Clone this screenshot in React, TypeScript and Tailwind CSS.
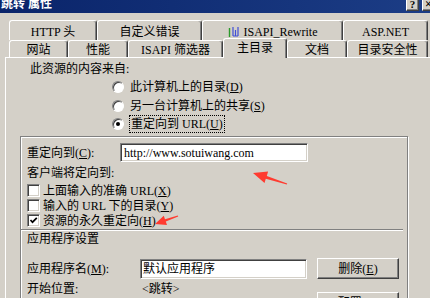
import React from "react";

const FONT = "font-['Liberation_Serif','Noto_Sans_CJK_SC',serif]";

const RAISED =
  "border border-t-white border-l-white border-r-[#404040] border-b-[#404040] shadow-[inset_-1px_-1px_#808080]";
const SUNKEN =
  "bg-white border border-t-[#808080] border-l-[#808080] border-r-white border-b-white shadow-[inset_1px_1px_#404040,inset_-1px_-1px_#d4d0c8]";

function Key({ k }: { k: string }) {
  return (
    <>
      (<u>{k}</u>)
    </>
  );
}

function Radio({ checked }: { checked?: boolean }) {
  return (
    <span className="flex h-[12px] w-[12px] shrink-0 items-center justify-center rounded-full border border-t-[#808080] border-l-[#808080] border-r-white border-b-white bg-white shadow-[inset_1px_1px_#404040]">
      {checked && <span className="h-[4px] w-[4px] rounded-full bg-black" />}
    </span>
  );
}

function Check({ checked }: { checked?: boolean }) {
  return (
    <span className={`flex h-[13px] w-[13px] shrink-0 items-center justify-center ${SUNKEN}`}>
      {checked && (
        <svg width="9" height="9" viewBox="0 0 9 9">
          <path d="M1.5 4 L3.5 6.2 L7.8 1.8" fill="none" stroke="#000" strokeWidth="1.7" />
        </svg>
      )}
    </span>
  );
}

function BackTab({ w, children }: { w: number; children: React.ReactNode }) {
  return (
    <div
      style={{ width: w }}
      className="flex h-full items-center justify-center rounded-t-[3px] border-t border-l border-white border-r border-r-[#404040] pt-[3px] shadow-[inset_-1px_0_#808080]"
    >
      {children}
    </div>
  );
}

function FrontTab({ w, selected, children }: { w: number; selected?: boolean; children: React.ReactNode }) {
  return (
    <div
      style={{ width: w }}
      className={
        selected
          ? "relative z-10 -mb-[1px] flex h-[20px] items-center justify-center rounded-t-[3px] border-t border-l border-white border-r border-r-[#404040] bg-[#d4d0c8] pb-[2px] shadow-[inset_-1px_0_#808080]"
          : "flex h-[17px] items-center justify-center rounded-t-[3px] border-t border-l border-white border-r border-r-[#404040] pt-[1px] shadow-[inset_-1px_0_#808080]"
      }
    >
      {children}
    </div>
  );
}

function RewriteIcon() {
  return (
    <svg width="12" height="12" viewBox="0 0 12 12" className="mr-[4px]">
      <path d="M1.5 2 V11" stroke="#2c9a2c" strokeWidth="1.4" />
      <path d="M5 1 V10 M7.5 4 V10 M10 1 V10 M5 10 H10" stroke="#3f4fd8" strokeWidth="1.2" fill="none" />
    </svg>
  );
}

export default function App() {
  return (
    <div className={`relative h-[298px] w-[430px] overflow-hidden bg-[#d4d0c8] text-[12px] leading-[14px] text-black ${FONT}`}>
      {/* Title bar */}
      <div className="flex h-[13px] items-start overflow-hidden bg-linear-to-r from-[#0a246a] to-[#1c3d86]">
        <span className="-mt-[3px] pl-[1px] text-[12px] font-bold leading-[14px] text-white">跳转 属性</span>
        <div className="ml-auto -mr-[5px] -mt-[3px] flex gap-[3px]">
          <div className={`flex h-[14px] w-[13px] items-center justify-center bg-[#d4d0c8] text-[11px] font-bold leading-none ${RAISED}`}>?</div>
          <div className={`flex h-[14px] w-[13px] items-center justify-center bg-[#d4d0c8] text-[12px] font-bold leading-none ${RAISED}`}>×</div>
        </div>
      </div>

      {/* Tabs */}
      <div className="pl-[9px] pt-[7px]">
        <div className="flex h-[20px]">
          <BackTab w={88}>HTTP 头</BackTab>
          <BackTab w={105}>自定义错误</BackTab>
          <BackTab w={141}>
            <RewriteIcon />
            ISAPI_Rewrite
          </BackTab>
          <BackTab w={85}>ASP.NET</BackTab>
        </div>
        <div className="flex h-[17px] items-end">
          <FrontTab w={59}>网站</FrontTab>
          <FrontTab w={60}>性能</FrontTab>
          <FrontTab w={95}>ISAPI 筛选器</FrontTab>
          <FrontTab w={64} selected>
            主目录
          </FrontTab>
          <FrontTab w={60}>文档</FrontTab>
          <FrontTab w={81}>目录安全性</FrontTab>
        </div>
      </div>

      {/* Panel */}
      <div className="ml-[5px] h-[260px] border-t border-l border-white">
        <div className="ml-[24px] mt-[4px]">此资源的内容来自:</div>
        <div className="ml-[106px] mt-[2px] flex flex-col">
          <div className="flex h-[18px] items-center gap-[6px]">
            <Radio />
            <span>
              此计算机上的目录<Key k="D" />
            </span>
          </div>
          <div className="flex h-[19px] items-center gap-[6px]">
            <Radio />
            <span>
              另一台计算机上的共享<Key k="S" />
            </span>
          </div>
          <div className="flex h-[18px] items-center gap-[5px]">
            <Radio checked />
            <span className="border border-dotted border-black px-[1px] py-[1px]">
              重定向到 URL<Key k="U" />
            </span>
          </div>
        </div>

        {/* Group */}
        <div className="ml-[14px] mt-[3px] h-[170px] w-[388px] border border-[#808080] shadow-[inset_1px_1px_white,1px_1px_white]">
          <div className="pl-[6px] pt-[6px]">
            <div className="flex items-center">
              <span className="w-[93px]">
                重定向到<Key k="C" />:
              </span>
              <div className={`flex h-[19px] w-[188px] items-center pl-[3px] ${SUNKEN}`}>http://www.sotuiwang.com</div>
            </div>
            <div className="mt-[4px]">客户端将定向到:</div>
            <div className="mt-[3px] flex flex-col">
              <div className="flex h-[15px] items-center gap-[3px]">
                <Check />
                <span>
                  上面输入的准确 URL<Key k="X" />
                </span>
              </div>
              <div className="flex h-[15px] items-center gap-[3px]">
                <Check />
                <span>
                  输入的 URL 下的目录<Key k="Y" />
                </span>
              </div>
              <div className="flex h-[15px] items-center gap-[3px]">
                <Check checked />
                <span>
                  资源的永久重定向<Key k="H" />
                </span>
              </div>
            </div>
          </div>
          <div className="mr-[4px] mt-[1px] h-[2px] border-t border-b border-t-[#808080] border-b-white" />
          <div className="pl-[6px]">
            <div className="mt-[1px]">应用程序设置</div>
            <div className="mt-[12px] flex items-center">
              <span className="w-[113px]">
                应用程序名<Key k="M" />:
              </span>
              <div className={`flex h-[20px] w-[167px] items-center pl-[2px] ${SUNKEN}`}>默认应用程序</div>
              <div className={`ml-[10px] flex h-[21px] w-[82px] items-center justify-center ${RAISED}`}>
                删除<Key k="E" />
              </div>
            </div>
            <div className="mt-[3px] flex items-start">
              <span className="w-[115px]">开始位置:</span>
              <span className="w-[175px]">&lt;跳转&gt;</span>
              <div className={`mt-[10px] flex h-[21px] w-[82px] items-center justify-center ${RAISED}`}>
                配置<Key k="G" />
              </div>
            </div>
          </div>
        </div>
      </div>

      {/* Annotation arrows */}
      <svg className="pointer-events-none absolute left-0 top-0" width="430" height="298" viewBox="0 0 430 298">
        <polygon
          points="253,173 268.1,171.6 266.8,175.9 287.2,183.5 286.8,184.5 265.8,178.7 264.5,183"
          fill="#ff3b30"
        />
        <polygon
          points="155,224 163.8,215.7 165,219.3 177.8,215.5 178.2,216.5 165.8,221.5 167,225.1"
          fill="#ff3b30"
        />
      </svg>
    </div>
  );
}
